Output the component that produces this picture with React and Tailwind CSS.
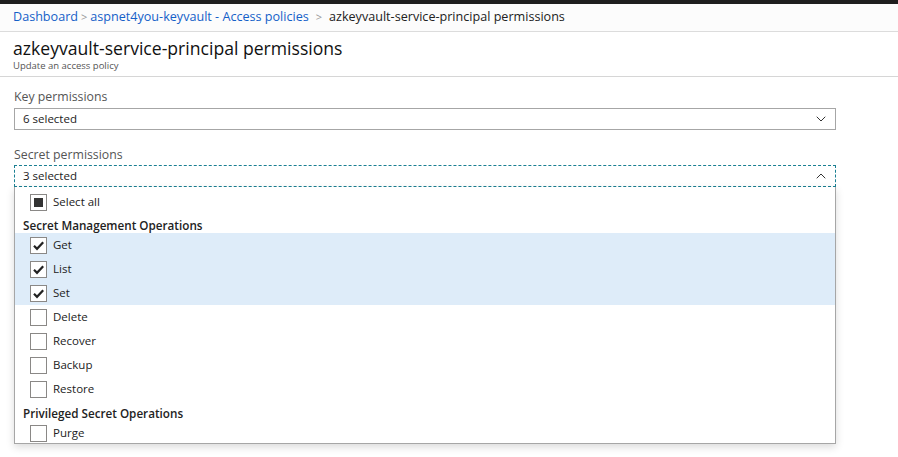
import { ChevronDown, ChevronUp } from 'lucide-react'

const font = { fontFamily: '"Open Sans", "Noto Sans", sans-serif' }

function Checkbox({ checked }) {
    return (
        <span className="w-[17px] h-[17px] border border-[#8a8886] bg-white flex items-center justify-center shrink-0">
            {checked && (
                <svg width="13" height="13" viewBox="0 0 13 13">
                    <path d="M2 6.8 L5 9.8 L11.2 3.2" fill="none" stroke="#222" strokeWidth="2.2" />
                </svg>
            )}
        </span>
    )
}

function Option({ label, checked }) {
    return (
        <div className={`h-6 flex items-center gap-[6px] pl-[15px] ${checked ? 'bg-[#deecf9]' : ''}`}>
            <Checkbox checked={checked} />
            <span className="text-[11.5px] text-[#222]">{label}</span>
        </div>
    )
}

const secretOps = [
    { label: 'Get', checked: true },
    { label: 'List', checked: true },
    { label: 'Set', checked: true },
    { label: 'Delete' },
    { label: 'Recover' },
    { label: 'Backup' },
    { label: 'Restore' },
]

export default function App() {
    return (
        <div className="w-[898px] h-[457px] bg-white overflow-hidden text-[#222]" style={font}>
            <div className="h-[4px] bg-[#1e1e1e]"></div>

            {/* Breadcrumb */}
            <div className="h-[28px] bg-[#fcfcfc] border-b border-[#dcdcdc] flex items-center px-[13px] text-[12.6px] gap-[2px]">
                <span className="text-[#1460c8]">Dashboard</span>
                <span className="text-[#999] text-[11px] mx-[1px]">&gt;</span>
                <span className="text-[#1460c8]">aspnet4you-keyvault - Access policies</span>
                <span className="text-[#999] text-[11px] mx-[5px]">&gt;</span>
                <span className="text-[#222]">azkeyvault-service-principal permissions</span>
            </div>

            {/* Title */}
            <div className="h-[45px] border-b border-[#d6d6d6] px-[13px] pt-[4px]">
                <h1 className="text-[17.6px] leading-[24px] text-[#111]">azkeyvault-service-principal permissions</h1>
                <p className="text-[9.5px] leading-[12px] text-[#555]">Update an access policy</p>
            </div>

            <main className="px-[14px]">
                <div className="w-[822px]">
                    <label className="block mt-[11px] text-[12.3px] leading-[17px] text-[#555]">Key permissions</label>
                    <div className="mt-[3px] h-[22px] border border-[#a6a6a6] flex items-center justify-between pl-[8px] pr-[6px]">
                        <span className="text-[11.5px]">6 selected</span>
                        <ChevronDown size={16} strokeWidth={1.5} className="text-[#333]" />
                    </div>

                    <label className="block mt-[16px] text-[12.3px] leading-[17px] text-[#555]">Secret permissions</label>
                    <div className="mt-[2px] h-[22px] border border-dashed border-[#1a7f92] bg-white flex items-center justify-between pl-[8px] pr-[6px]">
                        <span className="text-[11.5px]">3 selected</span>
                        <ChevronUp size={16} strokeWidth={1.5} className="text-[#333]" />
                    </div>

                    {/* Dropdown panel */}
                    <div className="h-[257px] border border-t-0 border-[#a6a6a6] shadow-[0_3px_8px_rgba(0,0,0,0.15)] pt-[3px]">
                        <div className="h-6 flex items-center gap-[6px] pl-[15px]">
                            <span className="w-[17px] h-[17px] border border-[#8a8886] bg-white flex items-center justify-center">
                                <span className="w-[9px] h-[9px] bg-[#333]"></span>
                            </span>
                            <span className="text-[11.5px]">Select all</span>
                        </div>
                        <div className="h-[19px] flex items-end pl-[8px] text-[11.7px] leading-[15px] font-semibold text-[#222]">Secret Management Operations</div>
                        {secretOps.map((op) => (
                            <Option key={op.label} label={op.label} checked={op.checked} />
                        ))}
                        <div className="h-5 flex items-end pl-[8px] text-[11.7px] leading-[15px] font-semibold text-[#222]">Privileged Secret Operations</div>
                        <Option label="Purge" />
                    </div>
                </div>
            </main>
        </div>
    )
}
